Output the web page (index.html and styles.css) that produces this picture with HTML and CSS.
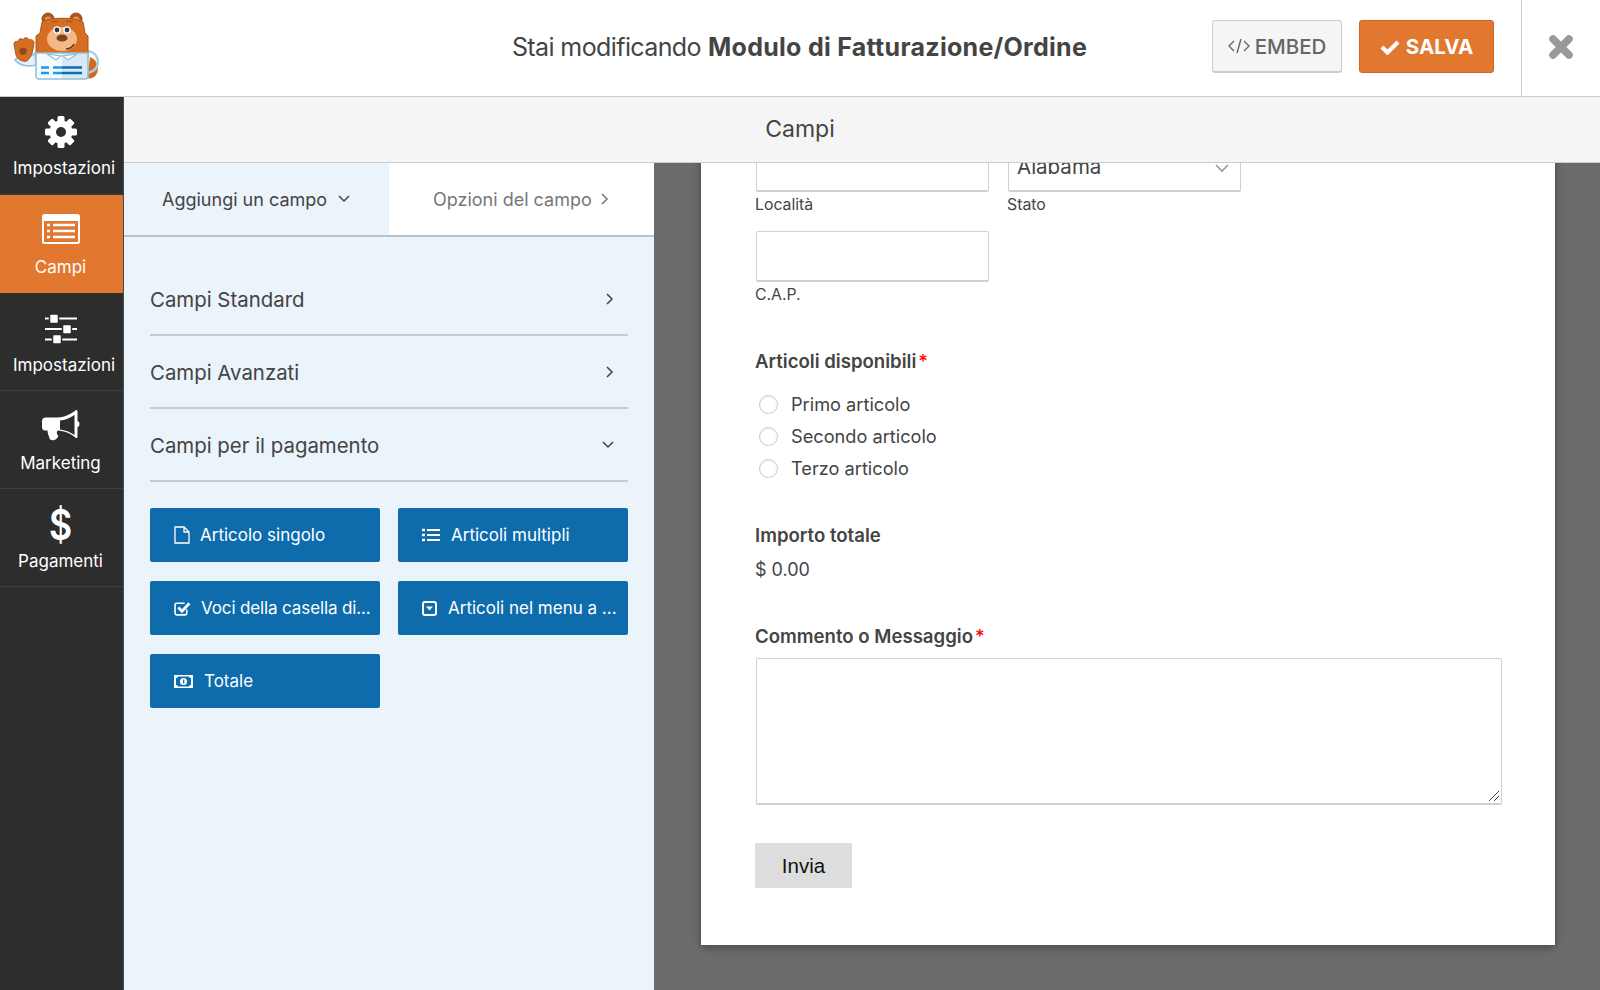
FILE: index.html
```html
<!DOCTYPE html>
<html lang="it">
<head>
<meta charset="utf-8">
<title>Modulo di Fatturazione/Ordine</title>
<link rel="stylesheet" href="styles.css">
</head>
<body>
<header class="topbar">
  <div class="logo">
    <svg width="110" height="96" viewBox="0 0 110 96">
      <path d="M90 57c8 3 10 12 6 18-2 3-6 4-9 3z" fill="#d3691f"/>
      <path d="M87 51c8 1 11 6 11 11s-3 9-10 11" fill="none" stroke="#a9cfe2" stroke-width="2.500"/>
      <circle cx="48" cy="19" r="6.500" fill="#a9551c"/><circle cx="48" cy="20" r="3.500" fill="#e8924f"/>
      <circle cx="76" cy="19" r="6.500" fill="#a9551c"/><circle cx="76" cy="20" r="3.500" fill="#e8924f"/>
      <path d="M42 22c6-5 34-5 41 0l2 11 3 3v22H36V36l4-3z" fill="#d56d22" stroke="#a9551c" stroke-width="1"/>
      <ellipse cx="62" cy="39" rx="15" ry="12" fill="#f3b884"/>
      <path d="M52 22.500q3-2 6-1M66 21.500q3-1 6 1" fill="none" stroke="#a9551c" stroke-width="1.200"/>
      <circle cx="57" cy="30" r="3.700" fill="#fff"/><circle cx="57" cy="30" r="2.400" fill="#2f3a4a"/>
      <circle cx="67" cy="30" r="3.700" fill="#fff"/><circle cx="67" cy="30" r="2.400" fill="#2f3a4a"/>
      <ellipse cx="62" cy="38" rx="5.500" ry="3.600" fill="#7c4022"/>
      <path d="M66 49c3 0 7-2 8-5" fill="none" stroke="#5a2f17" stroke-width="1.600"/>
      <path d="M35 53c-4 4-11 6-18 5l-2 2c5 6 14 7 21 5z" fill="#e5f0f8" stroke="#8fc0d8" stroke-width="1.500"/>
      <path d="M37 53h25v26H39q-3 0-3-3V53z" fill="#f6fafd"/>
      <path d="M62 53h26v23q0 3-3 3H62z" fill="#d8e9f5"/>
      <path d="M36 53h52v23q0 3-3 3H39q-3 0-3-3z" fill="none" stroke="#8fc0d8" stroke-width="1.500"/>
      <path d="M47 54l9 6 5-4zM77 54l-9 6-5-4z" fill="#fff" stroke="#8fc0d8" stroke-width="1.200"/>
      <path d="M41 67.500h8M41 73h8M53 67.500h9M53 73h9" stroke="#1a9ae8" stroke-width="2.400"/>
      <path d="M62 67.500h20M62 73h20" stroke="#0e6cad" stroke-width="2.400"/>
      <path d="M14 44c0-3 3-3 4-2 0-4 4-4 5-2 1-3 5-3 6 0 2-1 5 0 5 3-1 8-2 13-7 18-5 1-9-1-11-6z" fill="#d56d22" stroke="#a9551c" stroke-width="1"/>
      <path d="M19 50c2-3 7-3 8 0 0 3-2 5-4 5s-4-2-4-5z" fill="#8f4a20"/>
    </svg>
  </div>
  <h1 class="title"><span class="title-lead">Stai modificando</span> <strong>Modulo di Fatturazione/Ordine</strong></h1>
  <div class="actions">
    <button class="btn-embed" type="button">
      <svg class="embed-icon" width="22" height="18" viewBox="0 0 22 18"><path d="M6 4L1 9l5 5M16 4l5 5-5 5M13 2L9 16" fill="none" stroke="#666" stroke-width="1.400"/></svg>
      EMBED
    </button>
    <button class="btn-save" type="button">
      <svg width="20" height="16" viewBox="0 0 20 16"><path d="M2 8l5.500 5.500L18 3" fill="none" stroke="#fff" stroke-width="4.200"/></svg>
      SALVA
    </button>
  </div>
  <div class="close">
    <svg width="24" height="24" viewBox="0 0 24 24"><path d="M4 4l16 16M20 4L4 20" stroke="#999" stroke-width="7.500" stroke-linecap="round"/></svg>
  </div>
</header>

<div class="main">
  <nav class="sidebar">
    <a class="nav-item">
      <svg class="nav-icon" width="34" height="34" viewBox="0 0 34 34">
        <g fill="#fff">
          <rect x="13.500" y="1" width="7" height="32" rx="1.500"/>
          <rect x="13.500" y="1" width="7" height="32" rx="1.500" transform="rotate(45 17 17)"/>
          <rect x="13.500" y="1" width="7" height="32" rx="1.500" transform="rotate(90 17 17)"/>
          <rect x="13.500" y="1" width="7" height="32" rx="1.500" transform="rotate(135 17 17)"/>
          <circle cx="17" cy="17" r="11.500"/>
        </g>
        <circle cx="17" cy="17" r="5" fill="#2d2d2d"/>
      </svg>
      <span class="nav-label nav-label-wide">Impostazioni</span>
    </a>
    <a class="nav-item active">
      <svg class="nav-icon nav-icon-form" width="38" height="30" viewBox="0 0 38 30">
        <rect width="38" height="30" rx="2.500" fill="#fff"/>
        <rect x="2" y="7" width="34" height="21" fill="#e27730"/>
        <path d="M5 11h3M5 17h3M5 23h3M11 11h22M11 17h22M11 23h22" stroke="#fff" stroke-width="2.400"/>
      </svg>
      <span class="nav-label">Campi</span>
    </a>
    <a class="nav-item">
      <svg class="nav-icon nav-icon-sliders" width="34" height="30" viewBox="0 0 34 30">
        <g fill="#fff" stroke="#2d2d2d" stroke-width="1.500">
          <rect x="1" y="3.500" width="32" height="2" stroke="none"/><rect x="5.500" y="0" width="9" height="9.500" rx="1.500"/>
          <rect x="1" y="14" width="32" height="2" stroke="none"/><rect x="18.500" y="10.500" width="9" height="9.500" rx="1.500"/>
          <rect x="1" y="24.500" width="32" height="2" stroke="none"/><rect x="8.500" y="20.500" width="9" height="9.500" rx="1.500"/>
        </g>
      </svg>
      <span class="nav-label nav-label-wide">Impostazioni</span>
    </a>
    <a class="nav-item">
      <svg class="nav-icon" width="38" height="34" viewBox="0 0 38 34">
        <path fill="#fff" d="M34 1c1 0 1.500.5 1.500 1.500V12c1.500.5 2 1.500 2 3s-.5 2.500-2 3v9.500c0 1-.5 1.500-1.500 1.500-6-5-12-7-18-7.500l-1 1c-.5 1.500 0 3 1.500 4.500-1 2-2 3-3 3.500-1 1-4 1-5.500 0-1-3-2.500-6-2.500-9H3c-2 0-3-1.500-3-3V12c0-2 1.500-3.500 3.500-3.500H16C23 8 29 5 34 1zm-1.500 5C28 9 23 11 18 11.600v9c5 .5 10 2.500 14.500 5.400z"/>
      </svg>
      <span class="nav-label">Marketing</span>
    </a>
    <a class="nav-item">
      <span class="nav-dollar">$</span>
      <span class="nav-label">Pagamenti</span>
    </a>
  </nav>

  <div class="workspace">
    <div class="toolbar">Campi</div>
    <div class="panes">
      <aside class="panel">
        <div class="tabs">
          <div class="tab tab-on">Aggiungi un campo
            <svg width="12" height="8" viewBox="0 0 12 8"><path d="M1 1l5 5 5-5" fill="none" stroke="#444" stroke-width="1.500"/></svg>
          </div>
          <div class="tab tab-off">Opzioni del campo
            <svg width="8" height="12" viewBox="0 0 8 12"><path d="M1 1l5 5-5 5" fill="none" stroke="#777" stroke-width="1.500"/></svg>
          </div>
        </div>
        <div class="groups">
          <div class="group">Campi Standard
            <svg width="8" height="12" viewBox="0 0 8 12"><path d="M1 1l5 5-5 5" fill="none" stroke="#444" stroke-width="1.500"/></svg>
          </div>
          <div class="group">Campi Avanzati
            <svg width="8" height="12" viewBox="0 0 8 12"><path d="M1 1l5 5-5 5" fill="none" stroke="#444" stroke-width="1.500"/></svg>
          </div>
          <div class="group">Campi per il pagamento
            <svg width="12" height="8" viewBox="0 0 12 8"><path d="M1 1l5 5 5-5" fill="none" stroke="#444" stroke-width="1.500"/></svg>
          </div>
          <div class="field-grid">
            <button class="field-btn" type="button">
              <svg width="16" height="18" viewBox="0 0 16 18"><path d="M1 1h9l5 5v11H1zM10 1v5h5" fill="none" stroke="#fff" stroke-width="1.300"/></svg>
              <span class="fb-gap-a">Articolo singolo</span>
            </button>
            <button class="field-btn" type="button">
              <svg width="18" height="14" viewBox="0 0 18 14"><path d="M5 2h13M5 7h13M5 12h13" stroke="#fff" stroke-width="2"/><path d="M0 2h3M0 7h3M0 12h3" stroke="#fff" stroke-width="2.600"/></svg>
              <span class="fb-gap-b">Articoli multipli</span>
            </button>
            <button class="field-btn" type="button">
              <svg width="17" height="15" viewBox="0 0 16 14"><path d="M12 8v3.500q0 1.500-1.500 1.500h-8Q1 13 1 11.500v-8Q1 2 2.500 2H10" fill="none" stroke="#fff" stroke-width="1.500"/><path d="M4 6l3.500 3.500L14.500 2" fill="none" stroke="#fff" stroke-width="2.600"/></svg>
              <span class="fb-gap-a fb-tight">Voci della casella di...</span>
            </button>
            <button class="field-btn" type="button">
              <svg width="15" height="15" viewBox="0 0 15 15"><rect x="1" y="1" width="13" height="13" rx="2" fill="none" stroke="#fff" stroke-width="2"/><path d="M4 5.500h7l-3.500 4z" fill="#fff"/></svg>
              <span class="fb-gap-c">Articoli nel menu a ...</span>
            </button>
            <button class="field-btn" type="button">
              <svg width="19" height="13" viewBox="0 0 19 13"><path fill="#fff" fill-rule="evenodd" d="M0 0h19v13H0zM2 3v7q2 0 2 1.500h11Q15 10 17 10V3q-2 0-2-1.500H4Q4 3 2 3z"/><circle cx="9.500" cy="6.500" r="3.500" fill="#fff"/><rect x="9" y="4.500" width="1.300" height="4" fill="#0e6cad"/></svg>
              <span class="fb-gap-d">Totale</span>
            </button>
          </div>
        </div>
      </aside>

      <section class="canvas">
        <form class="card">
          <div class="row">
            <div class="col">
              <div class="input"></div>
              <div class="sublabel">Località</div>
            </div>
            <div class="col">
              <div class="input select">Alabama
                <svg width="14" height="9" viewBox="0 0 14 9"><path d="M1 1l6 6 6-6" fill="none" stroke="#999" stroke-width="1.600"/></svg>
              </div>
              <div class="sublabel">Stato</div>
            </div>
          </div>
          <div class="col cap">
            <div class="input"></div>
            <div class="sublabel">C.A.P.</div>
          </div>
          <div class="field-label fl-items">Articoli disponibili<span class="req">*</span></div>
          <ul class="radios">
            <li class="radio"><span class="dot"></span>Primo articolo</li>
            <li class="radio"><span class="dot"></span>Secondo articolo</li>
            <li class="radio"><span class="dot"></span>Terzo articolo</li>
          </ul>
          <div class="field-label fl-total">Importo totale</div>
          <div class="amount">$ 0.00</div>
          <div class="field-label fl-msg">Commento o Messaggio<span class="req">*</span></div>
          <div class="textarea">
            <svg class="grip" width="12" height="12" viewBox="0 0 12 12"><path d="M1 11L11 1M6 11l5-5" stroke="#444" stroke-width="1"/></svg>
          </div>
          <button class="submit" type="button">Invia</button>
        </form>
      </section>
    </div>
  </div>
</div>
</body>
</html>
```

FILE: styles.css
```css
* { box-sizing: border-box; }
html, body { height: 100%; }
body {
  margin: 0;
  height: 990px;
  overflow: hidden;
  display: flex;
  flex-direction: column;
  font-family: Inter, "Liberation Sans", sans-serif;
  color: #444;
  background: #fff;
}
button { font-family: inherit; }

/* top bar */
.topbar {
  height: 97px;
  flex: none;
  display: flex;
  align-items: center;
  border-bottom: 1px solid #ccc;
  background: #fff;
}
.logo { width: 124px; height: 96px; flex: none; }
.logo svg { display: block; }
.title {
  flex: 1;
  margin: 0 0 2px;
  text-align: center;
  font-size: 25px;
  font-weight: 400;
  color: #444;
  padding-left: 263px;
  white-space: nowrap;
}
.title-lead { letter-spacing: -0.6px; }
.title strong { font-weight: 700; letter-spacing: 0.28px; }
.actions { display: flex; gap: 17px; flex: none; margin: 0 27px 3px 0; }
.btn-embed, .btn-save {
  height: 53px;
  display: flex;
  align-items: center;
  justify-content: center;
  border-radius: 3px;
  font-size: 20.500px;
  white-space: nowrap;
}
.btn-embed {
  width: 130px;
  gap: 5px;
  background: #f5f5f5;
  border: 1px solid #ccc;
  border-bottom-width: 2px;
  color: #666;
  font-weight: 500;
}
.btn-save {
  width: 135px;
  gap: 6px;
  background: #e27730;
  border: 1px solid #cd6622;
  color: #fff;
  font-weight: 700;
}
.close {
  width: 79px;
  height: 96px;
  flex: none;
  display: flex;
  align-items: center;
  justify-content: center;
  padding-bottom: 2px;
  border-left: 1px solid #ccc;
}

/* main */
.main { flex: 1; display: flex; min-height: 0; }
.sidebar {
  width: 124px;
  flex: none;
  background: #2d2d2d;
  border-right: 1px solid #4a4a4a;
}
.nav-item {
  height: 98px;
  padding-right: 2px;
  display: flex;
  flex-direction: column;
  align-items: center;
  border-bottom: 1px solid #3f3f3f;
  color: #fff;
  position: relative;
}
.nav-item.active { background: #e27730; border-bottom-color: #e27730; }
.nav-item .nav-icon { height: 34px; margin-top: 18px; flex: none; }
.nav-item .nav-icon-form { margin-top: 17px; }
.nav-item .nav-icon-sliders { margin-top: 19px; }
.nav-label {
  position: absolute;
  top: 62px;
  font-size: 17px;
  line-height: 20px;
  white-space: nowrap;
}
.nav-item:first-child .nav-label { top: 61px; }
.nav-label-wide { left: 13px; }
.nav-dollar {
  font-size: 42px;
  font-weight: 600;
  line-height: 42px;
  margin-top: 15px;
  transform: scaleX(0.85);
}

/* workspace */
.workspace { flex: 1; display: flex; flex-direction: column; min-width: 0; }
.toolbar {
  height: 66px;
  flex: none;
  background: #f5f5f5;
  border-bottom: 1px solid #ccc;
  text-align: center;
  font-size: 23px;
  line-height: 64px;
  color: #444;
  padding-right: 124px;
  position: relative;
  z-index: 2;
}
.panes { flex: 1; display: flex; min-height: 0; }

/* panel */
.panel { width: 530px; flex: none; background: #ebf3fb; }
.tabs { display: flex; height: 74px; border-bottom: 2px solid #b6c2cf; }
.tab {
  display: flex;
  align-items: center;
  font-size: 18px;
  white-space: nowrap;
}
.tab-on { width: 265px; padding-left: 38px; gap: 11px; color: #444; }
.tab-off { flex: 1; padding-left: 44px; gap: 9px; color: #777; background: #fff; }
.groups { padding: 26px 26px 0; }
.group {
  height: 73px;
  display: flex;
  align-items: center;
  justify-content: space-between;
  padding: 1px 14px 0 0;
  border-bottom: 2px solid #c3ccd6;
  font-size: 20.400px;
  color: #444;
}
.field-grid {
  display: grid;
  grid-template-columns: 230px 230px;
  grid-auto-rows: 54px;
  gap: 19px 18px;
  margin-top: 26px;
}
.field-btn {
  display: flex;
  align-items: center;
  padding: 0 0 0 24px;
  background: #0e6cad;
  border: 0;
  border-radius: 2px;
  color: #fff;
  font-size: 17px;
  white-space: nowrap;
}
.fb-gap-a { margin-left: 10px; }
.fb-gap-b { margin-left: 11px; }
.fb-gap-c { margin-left: 11px; }
.fb-gap-d { margin-left: 11px; }
.fb-tight { letter-spacing: -0.13px; }

/* canvas */
.canvas {
  flex: 1;
  min-width: 0;
  background: #6b6b6b;
  padding: 0 45px 0 47px;
  overflow: hidden;
}
.card {
  margin-top: -22px;
  height: 804px;
  padding: 0 54px;
  background: #fff;
  box-shadow: 0 2px 8px rgba(0, 0, 0, 0.35);
}
.row { display: flex; gap: 19px; }
.col { width: 233px; }
.input {
  height: 51px;
  margin: 0 -1px 0 1px;
  background: #fff;
  border: 1px solid #d0d0d0;
  border-bottom-width: 2px;
  border-radius: 2px;
}
.select {
  display: flex;
  align-items: center;
  justify-content: space-between;
  padding: 0 11px 0 8px;
  font-size: 20.500px;
  color: #444;
}
.select svg { margin-top: 4px; }
.sublabel { font-size: 15.800px; line-height: 20px; margin-top: 3px; color: #444; }
.cap { margin-top: 16px; }
.field-label { font-size: 18.600px; font-weight: 600; line-height: 24px; color: #444; }
.req { color: #f00; margin-left: 2px; font-weight: 500; }
.fl-items { margin-top: 44px; }
.radios { list-style: none; margin: 15px 0 0; padding: 0; }
.radio {
  display: flex;
  align-items: center;
  height: 32px;
  font-size: 18.200px;
}
.dot {
  width: 19px;
  height: 19px;
  margin: 1px 13px 0 4px;
  border: 1px solid #ccc;
  border-radius: 50%;
  box-shadow: inset 0 1px 2px rgba(0, 0, 0, 0.08);
}
.fl-total { margin-top: 39px; }
.amount { font-size: 18px; line-height: 24px; margin-top: 11px; }
.fl-msg { margin-top: 42px; }
.textarea {
  height: 147px;
  width: 746px;
  margin: 10px 0 0 1px;
  border: 1px solid #d0d0d0;
  border-bottom-width: 2px;
  border-radius: 2px;
  position: relative;
}
.grip { position: absolute; right: 1px; bottom: 1px; }
.submit {
  display: block;
  width: 97px;
  height: 45px;
  margin-top: 38px;
  background: #ddd;
  border: 0;
  color: #111;
  font-family: "Liberation Sans", sans-serif;
  font-size: 20.500px;
}
```
